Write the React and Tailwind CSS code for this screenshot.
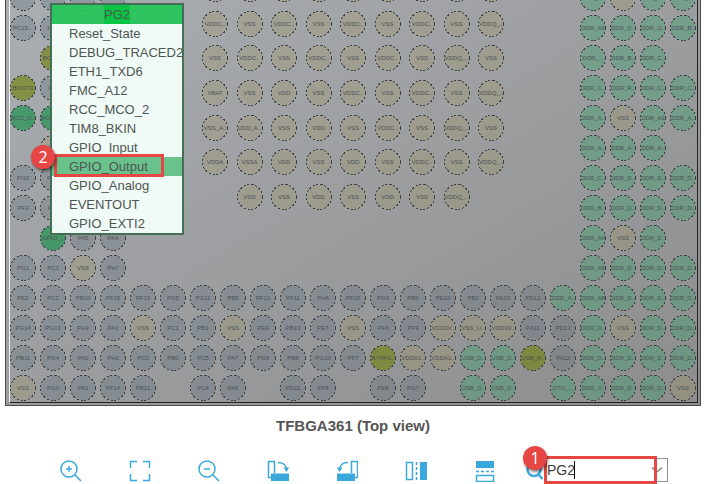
import { useState } from "react";

// Outer ring of balls, one string per row
// "-" is an empty position, "*" and "+" are unnamed I/O and power balls
const GAP = "- - - - - - - - - - - - - - -";
const OUTER_ROWS = [
  `PE5 PE6 PC13 PC14 ${GAP} DDR_A.. VSS DDR_R.. DDR_B..`,
  `PC15-.. PC9 * - ${GAP} DDR_A0 DDR_D.. DDR_O.. DDR_B..`,
  `- BOOT1 * - ${GAP} DDR_... DDR_B.. DDR_C.. -`,
  `BOOT0 PI9 - - ${GAP} DDR_C.. DDR_R.. DDR_C.. DDR_C..`,
  `RCC_O.. RCC_O.. - - ${GAP} DDR_A.. VSS DDR_A1 DDR_A..`,
  `- VSS - - ${GAP} DDR_A.. DDR_A.. DDR_A.. -`,
  `PI10 PI11 - - ${GAP} DDR_C.. DDR_D.. DDR_D.. DDR_D..`,
  `PF3 PF2 - - ${GAP} DDR_B.. DDR_D.. DDR_D.. DDR_D..`,
  `- GPIO_.. PA5 PA4 ${GAP} DDR_A4 VSS DDR_D.. -`,
  `PG1 PC3 VSS PH7 ${GAP} DDR_A6 DDR_D.. DDR_D.. DDR_D..`,
  "PE2 PC2 PB10 PF15 PF13 PG5 PG11 PB5 PF12 PF11 PH6 PF10 PG9 PB6 PE10 PB2 PA10 PD12 DDR_A.. DDR_A8 DDR_D.. DDR_D.. DDR_D..",
  "PG14 PG13 PH3 PA1 VSS PC1 PB1 VSS PE9 PB13 PE7 VSS PF6 PF9 VDD3V.. VSS_U.. VDD3V.. PA11 PD13 DDR_D.. VSS DDR_D.. DDR_D..",
  "PB11 PG4 PA0 PH2 PC0 PB0 PC5 PA7 PG8 PB8 PG10 PF7 BYPAS.. VDDA1.. VDDA1.. USB_D.. USB_D.. USB_R.. PA12 DDR_D.. DDR_D.. DDR_D.. DDR_D..",
  "VSS PG0 PA2 PF14 PB12 - PC4 PA6 - PD11 PF8 - PE8 PG7 - USB_D.. USB_D.. - OTG_... DDR_V.. DDR_D.. DDR_D.. VSS",
];

// Power balls in the middle of the package
const INNER_ROWS = [
  "+ + + + + + + + +",
  "VDDC.. VSS VDDC.. VSS VDDC.. VSS VDDC.. VSS VDDQ_..",
  "VSS VDDC.. VSS VDDC.. VSS VDDC.. VSS VDDQ_.. VSS",
  "VBAT VSS VDD VSS VDDC.. VSS VDDC.. VSS VDDQ_..",
  "VSS_A.. VDD_A.. VSS VDD VSS VDDC.. VSS VDDQ_.. VSS",
  "VDDA VSSA VDD VSS VDD VSS VDDC.. VSS VDDQ_..",
  "- VDD VSS VDD VSS VDD VSS VDDQ_.. -",
];

const MENU_ITEMS = [
  "Reset_State",
  "DEBUG_TRACED2",
  "ETH1_TXD6",
  "FMC_A12",
  "RCC_MCO_2",
  "TIM8_BKIN",
  "GPIO_Input",
  "GPIO_Output",
  "GPIO_Analog",
  "EVENTOUT",
  "GPIO_EXTI2",
];

// Fill colour depends on what the ball is used for
function pinFill(label) {
  if (/^(BOOT|BYPAS|USB_R)/.test(label)) return "fill-[#73841a]/70";
  if (/^(RCC|GPIO)/.test(label)) return "fill-[#209250]/70";
  if (/^(DDR|USB|OTG)/.test(label)) return "fill-[#3ca06e]/40";
  if (/^[V+]/.test(label)) return "fill-[#a09660]/30";
  return "fill-[#5a6978]/30";
}

function Pin({ label }) {
  if (label === "-") return <div />;
  const named = label !== "*" && label !== "+";
  return (
    <div className="grid place-items-center">
      <svg className="col-start-1 row-start-1 size-[26px]" viewBox="0 0 26 26">
        <circle cx="13" cy="13" r="12.5" className={pinFill(label)} />
        <circle
          cx="13"
          cy="13"
          r="12.5"
          fill="none"
          stroke="#3c4044"
          strokeDasharray="2 2"
          shapeRendering="crispEdges"
        />
      </svg>
      {named && (
        <span className="col-start-1 row-start-1 text-[6px] leading-none text-[#4b5055]">
          {label}
        </span>
      )}
    </div>
  );
}

function Badge({ children, className }) {
  return (
    <span
      className={`absolute flex size-6 items-center justify-center rounded-full bg-[#e64644] font-['Open_Sans',sans-serif] text-base leading-none text-white shadow-[1px_2px_3px_rgba(0,0,0,0.5)] ${className}`}
    >
      {children}
    </span>
  );
}

function PinMenu() {
  const [selected, setSelected] = useState("GPIO_Output");

  return (
    <div className="absolute top-[3px] left-[44px] w-[134px] border-2 border-[#456f55] text-[13px] leading-[19px] text-[#4f5552]">
      <div className="bg-[#27c65d]/95 text-center">
        <span className="inline-block bg-[#0ac544]">PG2</span>
      </div>
      <ul className="bg-[#f3fdf9]/97">
        {MENU_ITEMS.map((item) => (
          <li key={item} className={item === selected ? "relative bg-[#69c28c]" : ""}>
            <button
              type="button"
              className="block h-[19px] w-full pl-[17px] text-left whitespace-nowrap"
              onClick={() => setSelected(item)}
            >
              {item}
            </button>
            {item === selected && (
              <>
                <span className="pointer-events-none absolute -top-[3px] right-[18px] -bottom-px left-[2px] border-3 border-[#e64644]" />
                <Badge className="-top-3 -left-[21px]">2</Badge>
              </>
            )}
          </li>
        ))}
      </ul>
    </div>
  );
}

// Toolbar drawings, all on a 23x24 canvas
const TOOLS = [
  {
    name: "Zoom in",
    art: <path d="M18 11a8 8 0 1 1-16 0a8 8 0 1 1 16 0M16 17l6 6M7 11h6M10 8v6" />,
  },
  {
    name: "Best fit",
    art: <path d="M2.500 10V3.500H9M15 3.500h6.500V10M21.500 16v6.500H15M9 22.500H2.500V16" />,
  },
  {
    name: "Zoom out",
    art: <path d="M18 11a8 8 0 1 1-16 0a8 8 0 1 1 16 0M16 17l6 6M7 11h6" />,
  },
  {
    name: "Rotate clockwise",
    art: (
      <>
        <path d="M5 19.500H2.500V3.500H8.500V15M12 4.500c4 0 7.500 2 8.500 6" />
        <path d="M5 15.500h18V23H5zM17.500 9.500h5.500l-2.500 4.500z" fill="currentColor" stroke="none" />
      </>
    ),
  },
  {
    name: "Rotate counter-clockwise",
    art: (
      <>
        <path d="M20 19.500h2.500V3.500h-6V15M13 4.500c-4 0-7.500 2-8.500 6" />
        <path d="M2 15.500h18V23H2zM2 9.500h5.500L4.500 14z" fill="currentColor" stroke="none" />
      </>
    ),
  },
  {
    name: "Flip horizontally",
    art: (
      <>
        <path d="M2.500 4.500h6v17h-6z" />
        <path d="M12.500 4v18" strokeDasharray="3 2" />
        <path d="M16 4h7v18h-7z" fill="currentColor" stroke="none" />
      </>
    ),
  },
  {
    name: "Flip vertically",
    art: (
      <>
        <path d="M3 3h18v7H3z" fill="currentColor" stroke="none" />
        <path d="M3 13.500h18" strokeDasharray="3 2" />
        <path d="M3.500 17.500h17v6h-17z" />
      </>
    ),
  },
];

function Toolbar() {
  const [query, setQuery] = useState("PG2");

  return (
    <div className="flex h-7 items-center pl-9 text-[#3aa8dc]">
      {TOOLS.map((tool) => (
        <button
          key={tool.name}
          type="button"
          aria-label={tool.name}
          className="flex w-[69px] justify-center"
        >
          <svg
            className="h-6 w-[23px]"
            viewBox="0 0 23 24"
            fill="none"
            stroke="currentColor"
            strokeWidth="1.5"
          >
            {tool.art}
          </svg>
        </button>
      ))}

      {/* Pin search */}
      <div className="relative flex items-center pl-[7px]">
        <label htmlFor="pin-search" aria-label="Search pin">
          <svg className="h-6 w-5" viewBox="0 0 20 24" fill="none" stroke="currentColor" strokeWidth="2.5">
            <circle cx="8" cy="11.500" r="6.500" />
            <path d="M12.500 16.500l4 4.500" />
          </svg>
        </label>
        <div className="flex h-6 w-[122px] items-center border border-[#8f9296] bg-white">
          <input
            id="pin-search"
            className="h-full min-w-0 flex-1 text-[14px] text-[#3f3f3f] outline-none"
            value={query}
            onChange={(e) => setQuery(e.target.value)}
          />
          <button type="button" aria-label="Show matches" className="mr-1 text-[#777777]">
            <svg className="h-2.5 w-3" viewBox="0 0 12 10" fill="none" stroke="currentColor" strokeWidth="1.300">
              <path d="M1 2.500l5 4.500l5-4.500" />
            </svg>
          </button>
        </div>
        <span className="absolute top-[3px] left-[55px] h-[18px] w-px bg-black" />
        <span className="pointer-events-none absolute -top-0.5 left-[25px] h-7 w-[113px] border-3 border-[#e64644]" />
        <Badge className="-top-3 left-1">1</Badge>
      </div>
    </div>
  );
}

export default function App() {
  return (
    <main className="overflow-hidden bg-white font-['Liberation_Sans',Arial,sans-serif]">
      {/* Chip package */}
      <div className="relative mr-[11px] ml-[5px] overflow-hidden border border-t-0 border-[#4a4c4e] bg-linear-to-br from-[#aaaeb2] to-[#8d8d8d] pr-[2px] pb-[2px] pl-[3px]">
        <div className="border-r border-b border-l border-r-[#222222] border-b-[#222222] border-l-[#f0f2f3]">
          <div className="-mt-[17px] -mr-px -mb-px -ml-[2px] grid">
            <div className="col-start-1 row-start-1 grid auto-rows-[30px] grid-cols-[repeat(23,minmax(0,1fr))]">
              {OUTER_ROWS.map((row, r) =>
                row.split(" ").map((label, c) => <Pin key={`${r}-${c}`} label={label} />)
              )}
            </div>
            <div className="col-start-1 row-start-1 -mt-[11px] grid h-[242px] w-[45%] grid-cols-9 grid-rows-7 justify-self-center">
              {INNER_ROWS.map((row, r) =>
                row.split(" ").map((label, c) => <Pin key={`${r}-${c}`} label={label} />)
              )}
            </div>
          </div>
        </div>
        <PinMenu />
      </div>

      <h1 className="mr-[6px] py-[10px] text-center text-[15px] leading-5 font-bold text-[#555555]">
        TFBGA361 (Top view)
      </h1>
      <div className="mt-[10px]">
        <Toolbar />
      </div>
    </main>
  );
}
